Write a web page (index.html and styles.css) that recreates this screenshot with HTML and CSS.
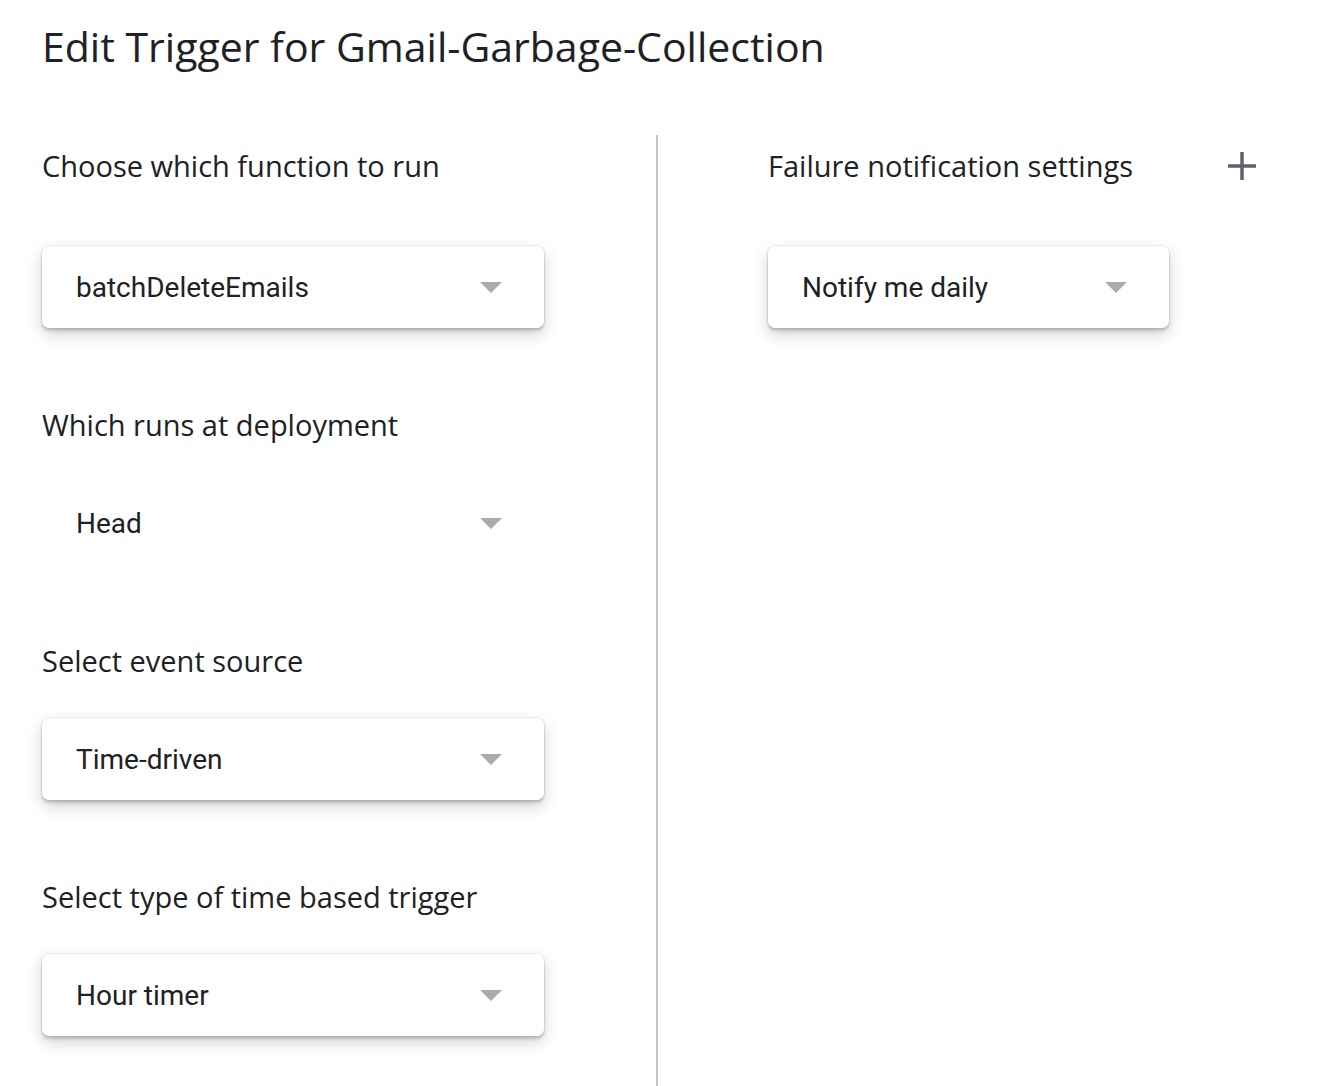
FILE: index.html
```html
<!DOCTYPE html>
<html>
<head>
<meta charset="utf-8">
<link rel="stylesheet" href="styles.css">
</head>
<body>
<div class="page">
  <h1 class="title">Edit Trigger for Gmail-Garbage-Collection</h1>
  <div class="columns">
    <div class="col left">
      <div class="section first">
        <div class="label">Choose which function to run</div>
        <div class="select card"><span class="value">batchDeleteEmails</span><span class="arrow"></span></div>
      </div>
      <div class="section">
        <div class="label">Which runs at deployment</div>
        <div class="select flat"><span class="value">Head</span><span class="arrow"></span></div>
      </div>
      <div class="section">
        <div class="label">Select event source</div>
        <div class="select card"><span class="value">Time-driven</span><span class="arrow"></span></div>
      </div>
      <div class="section">
        <div class="label">Select type of time based trigger</div>
        <div class="select card"><span class="value">Hour timer</span><span class="arrow"></span></div>
      </div>
    </div>
    <div class="divider"></div>
    <div class="col right">
      <div class="section first">
        <div class="label-row">
          <div class="label">Failure notification settings</div>
          <svg class="plus" width="28" height="28" viewBox="0 0 28 28"><path d="M14 0v28M0 14h28" stroke="#5f6368" stroke-width="3.5" fill="none"/></svg>
        </div>
        <div class="select card narrow"><span class="value">Notify me daily</span><span class="arrow"></span></div>
      </div>
    </div>
  </div>
</div>
</body>
</html>
```

FILE: styles.css
```css
html, body {
  margin: 0;
  padding: 0;
  background: #fff;
}
.page {
  padding: 0 0 0 42px;
  width: 1282px;
  height: 1086px;
  overflow: hidden;
}
.title {
  margin: 0;
  padding-top: 21px;
  height: 108px;
  box-sizing: border-box;
  font-family: "Open Sans", sans-serif;
  font-weight: 400;
  font-size: 41px;
  line-height: 50px;
  color: #202124;
  letter-spacing: 0;
}
.columns {
  display: flex;
  align-items: stretch;
  height: 978px;
}
.col.left {
  width: 502px;
}
.divider {
  width: 2px;
  background: #c4c4c4;
  margin-left: 112px;
  margin-top: 27px;
}
.col.right {
  margin-left: 110px;
  width: 490px;
}
.section {
  display: flex;
  flex-direction: column;
}
.section.first {
  padding-top: 39px;
}
.section + .section {
  margin-top: 78px;
}
.label {
  font-family: "Open Sans", sans-serif;
  font-size: 29px;
  line-height: 38px;
  color: #202124;
}
.section.first .label {
  margin-bottom: 61px;
}
.section .label {
  margin-bottom: 38px;
}
.section.first .label-row .label {
  margin-bottom: 0;
}
.label-row {
  display: flex;
  justify-content: space-between;
  align-items: center;
  margin-bottom: 61px;
}
.plus {
  margin-right: 2px;
}
.select {
  height: 82px;
  box-sizing: border-box;
  display: flex;
  align-items: center;
  justify-content: space-between;
  padding: 0 42px 0 34px;
  border-radius: 7px;
  background: #fff;
}
.select.card {
  box-shadow: 0 0 0 1px rgba(0,0,0,0.05), 0 3px 3px rgba(0,0,0,0.16), 0 6px 16px rgba(0,0,0,0.18);
}
.select.narrow {
  width: 401px;
}
.value {
  font-family: Roboto, sans-serif;
  font-size: 28px;
  color: #202124;
}
.arrow {
  width: 0;
  height: 0;
  border-left: 11px solid transparent;
  border-right: 11px solid transparent;
  border-top: 11px solid #ababab;
}
```
